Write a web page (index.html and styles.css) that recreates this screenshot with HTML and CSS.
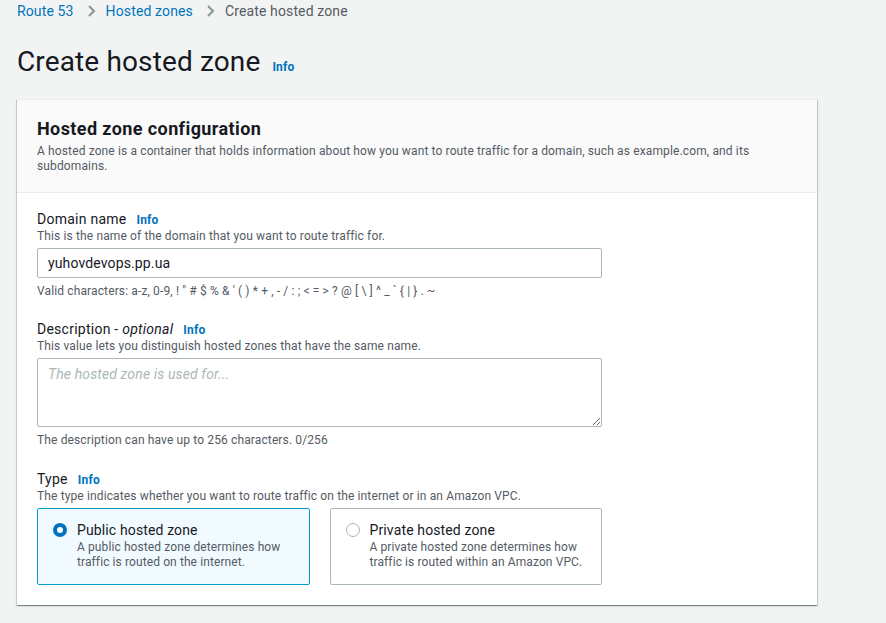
FILE: index.html
```html
<!DOCTYPE html>
<html>
<head>
<meta charset="utf-8">
<link rel="stylesheet" href="styles.css">
</head>
<body>
<div class="page">
  <nav class="crumbs">
    <a class="crumb-link">Route 53</a>
    <svg class="chev" width="16" height="16" viewBox="0 0 16 16"><path d="M6 3l5 5-5 5" fill="none" stroke="#879596" stroke-width="2"/></svg>
    <a class="crumb-link">Hosted zones</a>
    <svg class="chev" width="16" height="16" viewBox="0 0 16 16"><path d="M6 3l5 5-5 5" fill="none" stroke="#879596" stroke-width="2"/></svg>
    <span class="crumb-current">Create hosted zone</span>
  </nav>

  <div class="title-row">
    <h1 class="title">Create hosted zone</h1>
    <a class="info">Info</a>
  </div>

  <section class="card">
    <header class="card-head">
      <h2 class="card-title">Hosted zone configuration</h2>
      <p class="card-desc">A hosted zone is a container that holds information about how you want to route traffic for a domain, such as example.com, and its subdomains.</p>
    </header>
    <div class="card-body">
      <div class="field">
        <div class="label-row"><span class="label">Domain name</span><a class="info">Info</a></div>
        <div class="hint">This is the name of the domain that you want to route traffic for.</div>
        <div class="input">yuhovdevops.pp.ua</div>
        <div class="constraint">Valid characters: a-z, 0-9, ! " # $ % &amp; ' ( ) * + , - / : ; &lt; = &gt; ? @ [ \ ] ^ _ ` { | } . ~</div>
      </div>

      <div class="field">
        <div class="label-row"><span class="label">Description - <i>optional</i></span><a class="info">Info</a></div>
        <div class="hint">This value lets you distinguish hosted zones that have the same name.</div>
        <textarea class="textarea" placeholder="The hosted zone is used for..."></textarea>
        <div class="constraint">The description can have up to 256 characters. 0/256</div>
      </div>

      <div class="field last">
        <div class="label-row"><span class="label">Type</span><a class="info">Info</a></div>
        <div class="hint">The type indicates whether you want to route traffic on the internet or in an Amazon VPC.</div>
        <div class="tiles">
          <div class="tile selected">
            <span class="radio on"></span>
            <div class="tile-text">
              <div class="tile-title">Public hosted zone</div>
              <div class="tile-desc">A public hosted zone determines how traffic is routed on the internet.</div>
            </div>
          </div>
          <div class="tile">
            <span class="radio"></span>
            <div class="tile-text">
              <div class="tile-title">Private hosted zone</div>
              <div class="tile-desc">A private hosted zone determines how traffic is routed within an Amazon VPC.</div>
            </div>
          </div>
        </div>
      </div>
    </div>
  </section>
</div>
</body>
</html>
```

FILE: styles.css
```css
* { box-sizing: border-box; }
html, body {
  margin: 0;
  padding: 0;
  background: #f2f3f3;
  font-family: Roboto, "Liberation Sans", sans-serif;
  color: #16191f;
  letter-spacing: 0.13px;
}
.page {
  padding: 0 17px;
  width: 886px;
  height: 623px;
  overflow: hidden;
}
.crumbs {
  display: flex;
  align-items: center;
  height: 22px;
  font-size: 14px;
  line-height: 22px;
}
.crumb-link { color: #0073bb; }
.crumb-current { color: #545b64; }
.chev { margin: 0 7px 0 9px; }
.title-row {
  display: flex;
  align-items: baseline;
  margin-top: 22px;
  height: 44px;
}
.title {
  margin: 0;
  font-size: 28px;
  font-weight: 400;
  line-height: 36px;
  color: #16191f;
}
.info {
  color: #0073bb;
  font-size: 12px;
  font-weight: 700;
  margin-left: 12px;
  letter-spacing: 0.2px;
}
.card {
  margin-top: 11px;
  width: 800px;
  background: #fff;
  box-shadow: 0 1px 1px 0 rgba(0,28,36,0.3), 1px 1px 1px 0 rgba(0,28,36,0.15), -1px 1px 1px 0 rgba(0,28,36,0.15);
  border-top: 1px solid #eaeded;
}
.card-head {
  background: #fafafa;
  border-bottom: 1px solid #eaeded;
  padding: 17px 20px 18px;
}
.card-title {
  margin: 0;
  font-size: 18px;
  font-weight: 700;
  line-height: 24px;
  letter-spacing: 0.4px;
}
.card-desc {
  margin: 3px 0 0;
  font-size: 12px;
  line-height: 15px;
  color: #545b64;
}
.card-body {
  padding: 16px 20px 20px;
}
.field { margin-bottom: 20px; }
.field.last { margin-bottom: 0; padding-top: 1px; }
.label-row {
  display: flex;
  align-items: baseline;
  height: 20px;
  font-size: 14px;
  line-height: 20px;
  letter-spacing: 0.25px;
}
.label-row .info { margin-left: 10px; line-height: 1; }
.hint {
  font-size: 12px;
  line-height: 15px;
  color: #545b64;
  margin-bottom: 4px;
}
.input {
  width: 565px;
  height: 30px;
  border: 1px solid #aab7b8;
  border-radius: 2px;
  padding: 0 10px;
  font-size: 14px;
  line-height: 28px;
}
.textarea {
  display: block;
  width: 565px;
  height: 69px;
  border: 1px solid #aab7b8;
  border-radius: 2px;
  padding: 4px 10px;
  font-family: inherit;
  font-size: 14px;
  line-height: 22px;
  resize: vertical;
  margin: 0;
  letter-spacing: 0.13px;
}
.textarea::placeholder { color: #aab7b8; font-style: italic; }
.constraint {
  font-size: 12px;
  line-height: 16px;
  color: #545b64;
  margin-top: 5px;
}
.tiles {
  display: flex;
  gap: 20px;
  width: 565px;
}
.tile {
  flex: 1;
  height: 77px;
  border: 1px solid #aab7b8;
  border-radius: 2px;
  display: flex;
  padding: 12px 8px 0 15px;
}
.tile.selected {
  background: #f1faff;
  border-color: #00a1c9;
}
.radio {
  flex: none;
  width: 14px;
  height: 14px;
  border: 1px solid #aab7b8;
  border-radius: 50%;
  margin-top: 2px;
  margin-right: 10px;
  background: #fff;
}
.radio.on {
  border: 4px solid #0073bb;
}
.tile-title {
  font-size: 14px;
  line-height: 18px;
}
.tile-desc {
  font-size: 12px;
  line-height: 15px;
  color: #545b64;
  margin-top: 1px;
  letter-spacing: 0.1px;
}
```
